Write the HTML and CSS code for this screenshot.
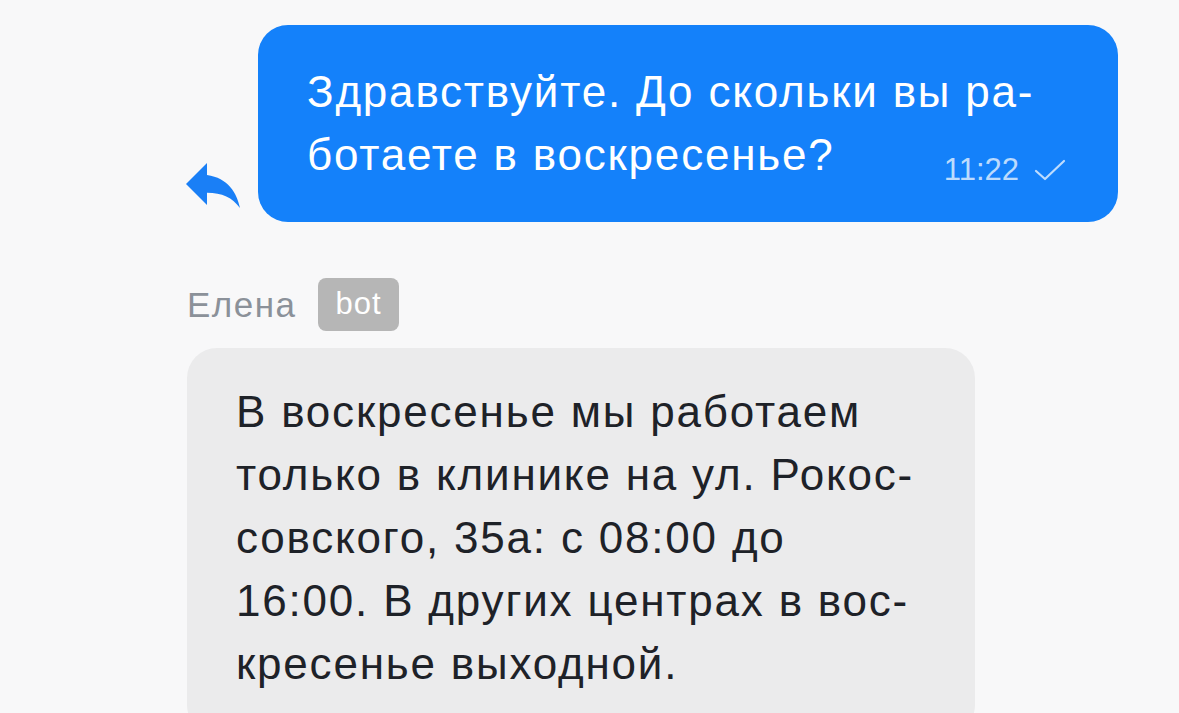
FILE: index.html
```html
<!DOCTYPE html>
<html lang="ru">
<head>
<meta charset="utf-8">
<title>Чат</title>
<link rel="stylesheet" href="styles.css">
</head>
<body>
<div class="chat">
  <div class="out-row">
    <svg class="reply-icon" viewBox="3 5 18 15" width="54" height="45" aria-hidden="true">
      <path d="M10 9V5l-7 7 7 7v-4.1c5 0 8.5 1.6 11 5.1-1-5-4-10-11-11z" fill="#1a7ff6"/>
    </svg>
    <div class="bubble bubble-out">
      <div class="line">Здравствуйте. До скольки вы ра-</div>
      <div class="line line-last">
        <span>ботаете в воскресенье?</span>
        <span class="meta">11:22
          <svg class="check" viewBox="0 0 32 24" width="32" height="24" aria-hidden="true">
            <path d="M2 13 L11 21 L30 3" fill="none" stroke="currentColor" stroke-width="2.2" stroke-linecap="round" stroke-linejoin="round"/>
          </svg>
        </span>
      </div>
    </div>
  </div>

  <div class="sender">
    <span class="sender-name">Елена</span>
    <span class="badge">bot</span>
  </div>

  <div class="bubble bubble-in">
    <div class="line">В воскресенье мы работаем</div>
    <div class="line">только в клинике на ул. Рокос-</div>
    <div class="line">совского, 35а: с 08:00 до</div>
    <div class="line">16:00. В других центрах в вос-</div>
    <div class="line">кресенье выходной.</div>
  </div>
</div>
</body>
</html>
```

FILE: styles.css
```css
html, body {
  margin: 0;
  padding: 0;
  background: #f8f8f9;
  height: 100%;
  overflow: hidden;
}

body {
  font-family: "Liberation Sans", Arial, sans-serif;
}

.chat {
  padding-top: 25px;
}

.out-row {
  display: flex;
  justify-content: flex-end;
  align-items: flex-end;
  gap: 18px;
  padding-right: 61px;
}

.reply-icon {
  display: block;
  margin-bottom: 14px;
}

.bubble {
  box-sizing: border-box;
  border-radius: 30px;
  font-size: 44px;
  line-height: 63px;
  letter-spacing: 1.8px;
}

.bubble-out {
  width: 860px;
  height: 197px;
  padding: 35px 52px 0 49px;
  background: #1481fa;
  color: #ffffff;
}

.line {
  white-space: nowrap;
}

.line-last {
  display: flex;
  justify-content: space-between;
  align-items: baseline;
}

.meta {
  display: inline-flex;
  align-items: center;
  gap: 15px;
  font-size: 31px;
  letter-spacing: 0;
  color: rgba(255, 255, 255, 0.72);
  position: relative;
  top: 10px;
}

.check {
  display: block;
}

.sender {
  display: flex;
  align-items: center;
  gap: 21px;
  margin: 56px 0 17px 187px;
}

.sender-name {
  font-size: 35px;
  letter-spacing: 1.5px;
  color: #8b9199;
}

.badge {
  display: inline-block;
  height: 53px;
  line-height: 51px;
  padding: 0 17px 0 18px;
  border-radius: 8px;
  background: #b6b6b6;
  color: #ffffff;
  font-size: 31px;
  letter-spacing: 1px;
}

.bubble-in {
  width: 788px;
  margin-left: 187px;
  padding: 32px 40px 40px 49px;
  background: #ebebec;
  color: #1e2228;
}
```
